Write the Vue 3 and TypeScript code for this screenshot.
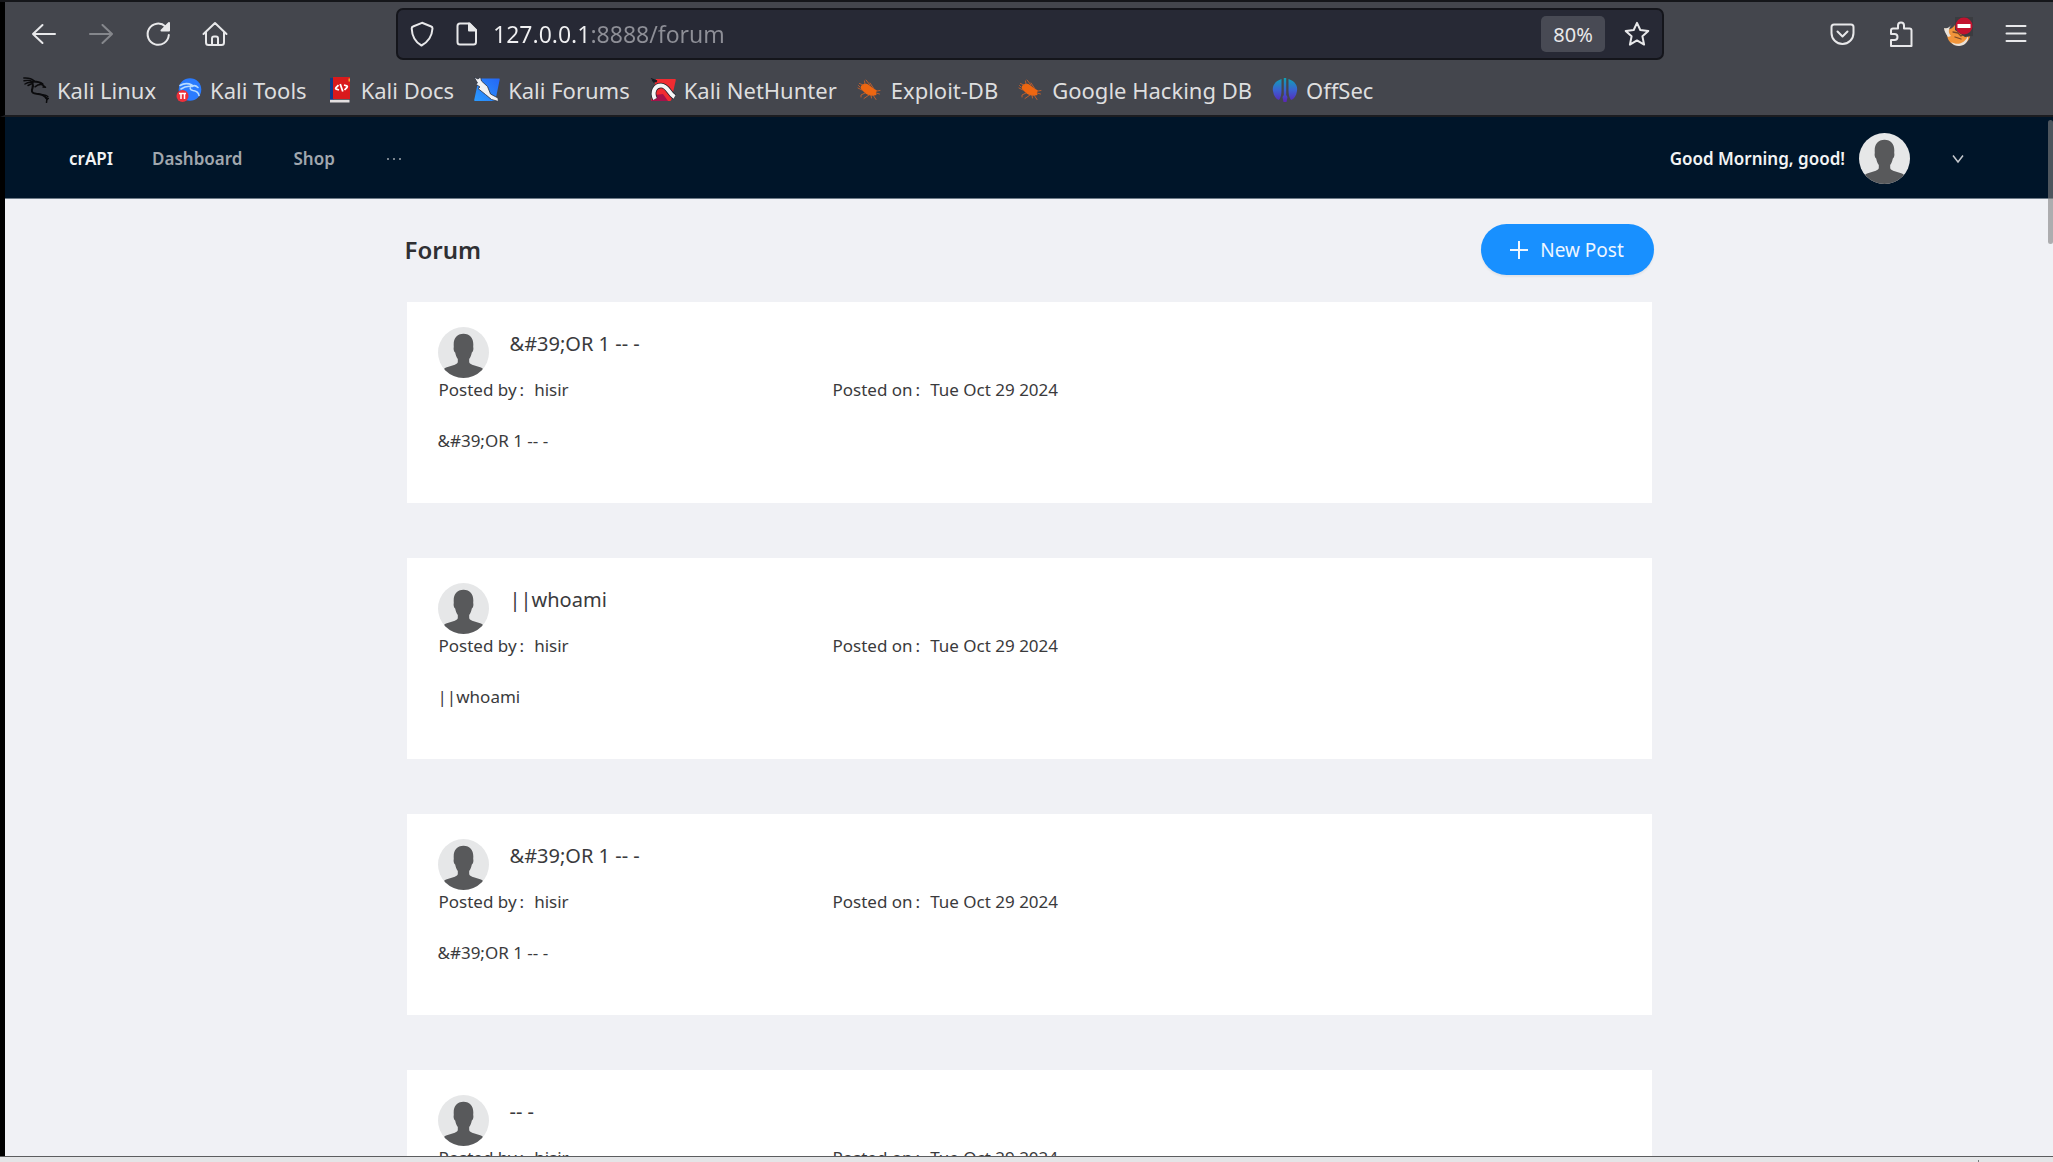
<script setup lang="ts">
import { ref } from 'vue'

interface Bookmark {
  name: string
  icon: string
}

interface Post {
  title: string
  author: string
  date: string
  content: string
}

const address = ref('127.0.0.1:8888/forum')

const bookmarks: Bookmark[] = [
  { name: 'Kali Linux', icon: 'kali' },
  { name: 'Kali Tools', icon: 'tools' },
  { name: 'Kali Docs', icon: 'docs' },
  { name: 'Kali Forums', icon: 'forums' },
  { name: 'Kali NetHunter', icon: 'nethunter' },
  { name: 'Exploit-DB', icon: 'bug' },
  { name: 'Google Hacking DB', icon: 'bug' },
  { name: 'OffSec', icon: 'offsec' },
]

const date = 'Tue Oct 29 2024'
const posts: Post[] = [
  { title: '&#39;OR 1 -- -', author: 'hisir', date, content: '&#39;OR 1 -- -' },
  { title: '||whoami', author: 'hisir', date, content: '||whoami' },
  { title: '&#39;OR 1 -- -', author: 'hisir', date, content: '&#39;OR 1 -- -' },
  { title: '-- -', author: 'hisir', date, content: '-- -' },
]
</script>

<template>
  <div class="browser">
    <svg class="defs" aria-hidden="true">
      <defs>
        <linearGradient id="offsec-fill" x1="0" y1="0" x2="0" y2="1">
          <stop offset="0" stop-color="#0fa3b5" />
          <stop offset="0.5" stop-color="#3a62d0" />
          <stop offset="1" stop-color="#5a25b8" />
        </linearGradient>
        <linearGradient id="blue-fill" x1="1" y1="0" x2="0" y2="1">
          <stop offset="0" stop-color="#2566f5" />
          <stop offset="1" stop-color="#2b9bff" />
        </linearGradient>
        <clipPath id="avatar-clip"><circle cx="26" cy="26" r="26" /></clipPath>
      </defs>
      <symbol id="avatar" viewBox="0 0 52 52">
        <g clip-path="url(#avatar-clip)">
          <rect width="52" height="52" fill="#e6e7e8" />
          <path d="M26 7c-6.500 0-10 4.500-10 10.500 0 2 .2 2.500 0 3.500-.4 2.500.6 4.500 1.500 5 .6 3 1.500 5 2.700 6.500v3c0 1.500-1.200 2.300-3 2.900L9 41c-2 .7-3 1.500-4 3L4 54h44l-1-10c-1-1.500-2-2.300-4-3l-8.200-2.600c-1.800-.6-3-1.400-3-2.900v-3c1.200-1.500 2.100-3.500 2.700-6.500.9-.5 1.900-2.500 1.500-5-.2-1 0-1.500 0-3.500C36 11.500 32.500 7 26 7z" fill="#58595b" />
        </g>
      </symbol>
      <symbol id="kali" viewBox="0 0 26 26">
        <g fill="none" stroke="#0b0b0d" stroke-linecap="round" stroke-linejoin="round">
          <path d="M.8 1c4-.3 7.500.2 10.500 3M1 3.800c3-.8 6-.6 9 .8M2 7c2.500-1.800 5-2 8-1.500M5 8.500 9 6.500" stroke-width="1.400" />
          <path d="M10.500 4.500c3 0 6 .2 9 2.500" stroke-width="2.200" />
          <path d="M9.500 6c1.200 3 0 4.500-.6 7-.4 2.500 1.600 3.500 4.600 3.700 4.500.2 8 1.300 10.500 5.300" stroke-width="2" />
          <path d="M24.800 19.500c-1.500-1.300-2.800-1.600-4.300-1.500M25.500 21.500l-2.500-.5M24.500 21.500c-1 1.500-1 2.500-1 4" stroke-width="1.500" />
          <path d="M12 9.800c2.500-2 5-2.800 7.500-2l3 2.500-2.500-.2" stroke-width="1.500" />
        </g>
      </symbol>
      <symbol id="tools" viewBox="0 0 26 26">
        <circle cx="14" cy="12.500" r="11.300" fill="#2a7bff" />
        <path d="M4 8.500c5-3 9-2 12-.5M5 12c4-3 8-3 11-2.500M15 8c-1.500 3-1 5 2 5.500 3 .4 5.500 1.500 6 5M16 9.500c2-1.500 4-1 6 1" fill="none" stroke="#b8dcff" stroke-width="1.600" stroke-linecap="round" />
        <circle cx="6.500" cy="19" r="6" fill="#ec2f3a" />
        <path d="M3 16.500h7M5 16.500V22M8.500 16.500V22" stroke="#fff" stroke-width="1.500" fill="none" />
      </symbol>
      <symbol id="docs" viewBox="0 0 26 26">
        <path d="M3 1h4v22l-4 1z" fill="#123a86" />
        <path d="M6 0h17v22H6z" fill="#d91a1c" />
        <path d="M21.500 1.500H23v3h-1.500z" fill="#f1a32a" />
        <path d="M3 22.800h19.500V25.500H3z" fill="#e3dfe0" />
        <path d="M11.500 8.200 9 10.700q-.8 1 .4 1.500l2.600.8M17 8l2.600.8q1.200.5.400 1.500L17.500 13M13.200 7l2.600 7.500" fill="none" stroke="#fff" stroke-width="1.800" />
      </symbol>
      <symbol id="forums" viewBox="0 0 26 26">
        <path d="M7 1.500h18q1 0 .7 1L21.500 23q-.2 1-1.200 1H1q-1 0-.8-1L4.500 3q.5-1.500 2.500-1.500z" fill="url(#blue-fill)" />
        <path d="m0 0 4 2 2.500-2 1 4 6 5.500 3 7.500 7.500 4 .5 3.500-7-2-6-5-7.500-6 2-1.500L1.500 7l2-1z" fill="#f1f1f3" stroke="#29303e" stroke-width=".8" />
      </symbol>
      <symbol id="nethunter" viewBox="0 0 26 26">
        <path d="M6 2h19q1 0 .8 1l-4.500 20q-.3 1-1.300 1H1z" fill="#f12b31" />
        <path d="M1 24h17l-5-7-8 1z" fill="#a5124a" />
        <path d="M1 1.500 7 4M3 5l4-1M2 3.500l5 1" stroke="#161a22" stroke-width="1.300" />
        <path d="M5 22C1.500 15 5 8.500 11 8.500c7 0 7.500 8 13.500 11.500" fill="none" stroke="#20232b" stroke-width="5.500" />
        <path d="M5 22C1.500 15 5 8.500 11 8.500c7 0 7.500 8 13.500 11.500" fill="none" stroke="#f5f5f6" stroke-width="4" />
      </symbol>
      <symbol id="bug" viewBox="0 0 26 26">
        <path d="M4 9c2.500-3 6-2.500 8-1l4.500 3.500 3.500 2-1 2.500.5 2-3.500.7c-4 0-6.500-1-9-3.700C5 13 3 11.500 4 9z" fill="#ef6610" />
        <path d="M6 8 2.500 6.500M5 13l-4-2M8 16l-4 2v2M12 18l-5 3.500M16 18l3 4.500M8 7 7.500 4M13 8l-4-5M17 12l-4-6M20 14l3-.5M19 16l3.500 1M14 18l.5 3M3 10 1.500 8.500" stroke="#c9602a" stroke-width=".9" fill="none" stroke-linecap="round" />
      </symbol>
      <symbol id="offsec" viewBox="0 0 26 26">
        <path d="M9.500 2C3 4 0 9 1 14c.7 5 3 8 6 9 2-3 2.500-6 2.500-10zM16.500 2C23 4 26 9 25 14c-.7 5-3 8-6 9-2-3-2.500-6-2.500-10zM11.800 1h2.400v17l1.300 2-1 5h-3l-1-5 1.300-2z" fill="url(#offsec-fill)" />
      </symbol>
    </svg>

    <div class="toolbar">
      <div class="history">
        <button type="button" aria-label="Back">
          <svg viewBox="0 0 26 26"><path d="M24 13H2M11.500 4 2 13l9.500 9" /></svg>
        </button>
        <button type="button" aria-label="Forward" disabled>
          <svg viewBox="0 0 26 26"><path d="M2 13h22M14.500 4 24 13l-9.500 9" /></svg>
        </button>
        <button type="button" aria-label="Reload">
          <svg viewBox="0 0 26 26">
            <path d="M20.500 5.500A10.600 10.600 0 1 0 23.800 14" />
            <path d="M24 2v7.500h-7.500z" class="solid" />
          </svg>
        </button>
        <button type="button" aria-label="Home">
          <svg viewBox="0 0 26 26"><path d="M1.500 13 13 2l11.500 11M4 11v10.500q0 2.500 2.500 2.500h13q2.500 0 2.500-2.500V11M10 24v-6.500q0-2 2-2h2q2 0 2 2V24" /></svg>
        </button>
      </div>

      <div class="urlbar">
        <svg class="stroke-icon" viewBox="0 0 26 26" aria-hidden="true"><path d="M12 1.800 3 5.500Q1.700 6 1.700 7.500C2 15 5 21 11.500 24.500 18 21 22 15 22.500 7.500q0-1.500-1.300-2z" /></svg>
        <svg class="stroke-icon page-icon" viewBox="0 0 26 26" aria-hidden="true">
          <path d="M5 2.500h9.500L21 9V21q0 2.500-2.500 2.500H5Q2.500 23.500 2.500 21V5Q2.500 2.500 5 2.500z" />
          <path d="M14 2.500V9.500h7z" class="solid" />
        </svg>
        <input v-model="address" type="text" aria-label="Address" spellcheck="false" />
        <button type="button" class="zoom">80%</button>
        <button type="button" class="star" aria-label="Bookmark this page">
          <svg viewBox="0 0 26 26"><path d="m13 1.800 3.300 7.200 8 1-5.900 5.300 1.700 8.300-7.100-4.200-7.100 4.200 1.700-8.300L1.700 10l8-1z" /></svg>
        </button>
      </div>

      <div class="extensions">
        <button type="button" aria-label="Save to Pocket">
          <svg viewBox="0 0 26 26"><path d="M5 3.500h17q2.500 0 2.500 2.500v6a11 11 0 0 1-22 0V6q0-2.500 2.500-2.500zM8.500 10.500l5 5 5-5" /></svg>
        </button>
        <button type="button" aria-label="Extensions">
          <svg viewBox="0 0 26 26"><path d="M4 25v-6h3.500a3 3 0 0 0 0-6H4V9.500q0-2 2-2h5V4.500a3 3 0 0 1 6 0v3h5.500q2 0 2 2V25z" /></svg>
        </button>
        <button type="button" class="fox" aria-label="FoxyProxy">
          <svg viewBox="0 0 30 30">
            <path d="M2 11c3 3 7 1 10-3h10c5 4 7 9 4 14-4 8-17 9-21 0z" fill="#f2953a" />
            <path d="M1 11c3 1 5 0 8-4-4 5-4 9-1 12l-3 1c-2-3-4-6-4-9zM8 25c7 4 14 1 17-6 1 6-4 10-9 10-3 0-6-1-8-4z" fill="#e9e2da" />
            <path d="m10 15 5 1 3 3 5-3M12 20l6 2" stroke="#7b4a28" stroke-width="1.300" fill="none" />
            <path d="M12 0h18v19l-8 1-10-7z" fill="#3b3c40" />
            <circle cx="21" cy="9" r="8.500" fill="#c2122f" />
            <path d="M14.500 7h13v4h-13z" fill="#fff" />
          </svg>
        </button>
        <button type="button" aria-label="Open application menu">
          <svg viewBox="0 0 26 26"><path d="M3.500 5h19M3.500 12.500h19M3.500 20h19" /></svg>
        </button>
      </div>
    </div>

    <nav class="bookmarks" aria-label="Bookmarks">
      <a v-for="mark in bookmarks" :key="mark.name" href="#">
        <svg aria-hidden="true"><use :href="'#' + mark.icon" /></svg>
        {{ mark.name }}
      </a>
    </nav>

    <div class="viewport">
      <header class="site-header">
        <a href="#" class="brand">crAPI</a>
        <nav class="menu" aria-label="Main">
          <a href="#">Dashboard</a>
          <a href="#">Shop</a>
          <button type="button" aria-label="More">
            <svg viewBox="0 0 16 4"><circle cx="2" cy="2" r="1" /><circle cx="8" cy="2" r="1" /><circle cx="14" cy="2" r="1" /></svg>
          </button>
        </nav>
        <span class="greeting">Good Morning, good!</span>
        <svg class="avatar" aria-hidden="true"><use href="#avatar" /></svg>
        <button type="button" class="account" aria-label="Account menu">
          <svg viewBox="0 0 12 12"><path d="m1 2.500 5 6.500 5-6.500" /></svg>
        </button>
      </header>

      <main>
        <div class="page-head">
          <h1>Forum</h1>
          <button type="button" class="new-post">
            <svg viewBox="0 0 18 18" aria-hidden="true"><path d="M9 0v18M0 9h18" /></svg>
            New Post
          </button>
        </div>

        <article v-for="(post, i) in posts" :key="i" class="post">
          <div class="post-head">
            <svg class="avatar" aria-hidden="true"><use href="#avatar" /></svg>
            <h2>{{ post.title }}</h2>
          </div>
          <dl>
            <div>
              <dt>Posted by</dt>
              <dd>{{ post.author }}</dd>
            </div>
            <div>
              <dt>Posted on</dt>
              <dd>{{ post.date }}</dd>
            </div>
          </dl>
          <p>{{ post.content }}</p>
        </article>
      </main>
      <div class="scroll-thumb"></div>
    </div>
    <footer class="window-edge"><span></span></footer>
  </div>
</template>

<style>
body {
  margin: 0;
}
</style>

<style scoped>
* {
  box-sizing: border-box;
}

.browser {
  display: flex;
  flex-direction: column;
  height: 100vh;
  overflow: hidden;
  background: #44464d;
  font-family: 'Noto Sans', sans-serif;
  border-top: 2px solid #15161a;
}

.defs {
  position: absolute;
  width: 0;
  height: 0;
}

button {
  padding: 0;
  border: 0;
  background: none;
  color: inherit;
  font: inherit;
}

a {
  color: inherit;
  text-decoration: none;
}

.toolbar,
.bookmarks,
.viewport {
  border-left: 5px solid #000;
}

.toolbar {
  display: flex;
  flex: none;
  align-items: center;
  height: 64px;
  padding: 0 24px 0 26px;
}

.history {
  display: flex;
  gap: 31px;
}

.extensions {
  display: flex;
  gap: 32px;
}

.toolbar button,
.stroke-icon {
  flex: none;
}

.toolbar svg {
  display: block;
  width: 26px;
  height: 26px;
  fill: none;
  stroke: #e8e8ea;
  stroke-width: 2;
  stroke-linejoin: round;
  stroke-linecap: round;
}

.toolbar .solid {
  fill: #e8e8ea;
}

.history button:disabled {
  opacity: 0.4;
}

.urlbar {
  display: flex;
  flex: 1;
  align-items: center;
  height: 52px;
  margin: 0 165px 0 168px;
  padding: 0 12px;
  background: #272935;
  border: 2px solid #14151b;
  border-radius: 7px;
}

.page-icon {
  margin-left: 19px;
}

.urlbar input {
  flex: 1;
  min-width: 0;
  height: 40px;
  margin-left: 12px;
  padding: 0;
  border: 0;
  outline: 0;
  background: linear-gradient(90deg, #f0f0f2 95px, #8e8f97 95px);
  background-clip: text;
  color: transparent;
  font: 23px/40px 'Noto Sans', sans-serif;
}

.urlbar .zoom {
  width: 64px;
  height: 36px;
  border-radius: 5px;
  background: #484a54;
  color: #e8e8ea;
  font-size: 20px;
}

.star {
  margin-left: 19px;
}

.toolbar .fox svg {
  width: 30px;
  height: 30px;
  margin: -4px -2px 0;
  stroke: none;
}

.bookmarks {
  display: flex;
  flex: none;
  align-items: center;
  gap: 20px;
  height: 51px;
  padding: 0 18px 2px;
  border-bottom: 2px solid #1b1c20;
  color: #dededf;
  font-size: 22px;
  white-space: nowrap;
}

.bookmarks a {
  display: flex;
  align-items: center;
  gap: 8px;
}

.bookmarks svg {
  width: 26px;
  height: 26px;
}

.viewport {
  position: relative;
  flex: 1;
  min-height: 0;
  overflow: hidden;
  background: #f0f1f5;
  color: #3a3a3c;
  font-size: 17px;
}

.site-header {
  display: flex;
  align-items: center;
  height: 82px;
  padding: 2px 89px 0 64px;
  background: #001529;
  border-bottom: 1px solid #6d7b88;
  color: #f2f3f4;
  font-weight: 600;
}

.menu {
  display: flex;
  flex: 1;
  align-items: center;
  gap: 51px;
  margin-left: 39px;
  color: #a0a7ae;
}

.menu svg {
  display: block;
  width: 16px;
  height: 4px;
  fill: #a0a7ae;
}

.avatar {
  flex: none;
  width: 51px;
  height: 51px;
}

.site-header .avatar {
  margin: 0 42px 0 14px;
}

.account svg {
  display: block;
  width: 12px;
  height: 12px;
  fill: none;
  stroke: #c5c9ce;
  stroke-width: 1.500;
}

main {
  max-width: 1249px;
  margin: 0 auto;
}

.page-head {
  display: flex;
  align-items: center;
  justify-content: space-between;
  padding: 25px 0 27px;
}

h1 {
  margin: 0;
  color: #2f3033;
  font-size: 24px;
  font-weight: 600;
  line-height: 34px;
}

.new-post {
  display: flex;
  align-items: center;
  justify-content: center;
  gap: 12px;
  width: 173px;
  height: 51px;
  border-radius: 26px;
  background: #1890ff;
  box-shadow: 0 2px 2px rgba(0, 0, 0, 0.06);
  color: #eef6ff;
  font-size: 19px;
}

.new-post svg {
  width: 18px;
  height: 18px;
  stroke: currentColor;
  stroke-width: 2;
}

.post {
  min-height: 201px;
  margin: 0 2px 55px;
  padding: 25px 31px 0;
  background: #fff;
}

.post-head {
  display: flex;
  gap: 21px;
  height: 51px;
}

h2 {
  margin: 0;
  font-size: 20px;
  font-weight: 400;
  line-height: 34px;
}

dl {
  display: grid;
  grid-template-columns: repeat(3, 1fr);
  margin: 0;
  padding-left: 1px;
  line-height: 24px;
}

dl div {
  display: flex;
}

dt::after {
  content: ':';
  margin: 0 10px 0 3px;
}

dd {
  margin: 0;
}

p {
  margin: 26px 0 0;
  line-height: 26px;
}

.scroll-thumb {
  position: absolute;
  top: 3px;
  right: 0;
  width: 5px;
  height: 124px;
  border-radius: 3px;
  background: rgba(128, 128, 128, 0.6);
}

.window-edge {
  display: flex;
  flex: none;
  justify-content: flex-end;
  align-items: flex-end;
  height: 6px;
  padding-right: 74px;
  background: #e4e5e7;
  border-top: 1px solid #5c5d5f;
}

.window-edge span {
  width: 1px;
  height: 2px;
  background: #77787a;
}
</style>
